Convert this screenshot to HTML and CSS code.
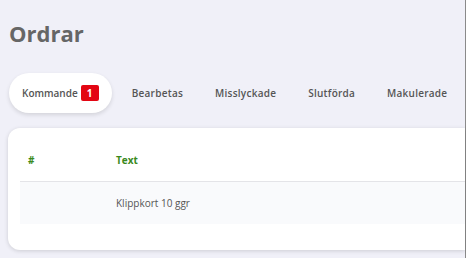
FILE: index.html
```html
<!DOCTYPE html>
<html lang="sv">
<head>
  <meta charset="UTF-8">
  <meta name="viewport" content="width=device-width, initial-scale=1.0">
  <title>Ordrar</title>
  <link rel="stylesheet" href="styles.css">
</head>
<body>
  <div class="page">
    <h1>Ordrar</h1>
    <div class="tabs">
      <div class="tab active">Kommande <span class="badge">1</span></div>
      <div class="tab">Bearbetas</div>
      <div class="tab">Misslyckade</div>
      <div class="tab">Slutförda</div>
      <div class="tab">Makulerade</div>
    </div>
    <div class="card">
      <table>
        <thead>
          <tr><th class="col-id">#</th><th>Text</th></tr>
        </thead>
        <tbody>
          <tr><td class="col-id"></td><td>Klippkort 10 ggr</td></tr>
        </tbody>
      </table>
    </div>
  </div>
</body>
</html>
```

FILE: styles.css
```css
body {
  margin: 0;
  font-family: "Open Sans", sans-serif;
  background-color: #f0f0f8;
  overflow: hidden;
}
.page {
  width: 465px;
  height: 258px;
  border-right: 1px solid #8a8a8a;
}
h1 {
  margin: 0;
  padding: 16px 0 0 9px;
  font-size: 22px;
  font-weight: 700;
  color: #666;
  line-height: 34px;
}
.tabs {
  display: flex;
  align-items: center;
  margin: 23px 0 0 9px;
  height: 40px;
}
.tab {
  font-size: 10px;
  font-weight: 600;
  color: #555;
  margin-right: 32px;
  display: flex;
  align-items: center;
  letter-spacing: 0.25px;
}
.tab.active {
  background: white;
  border-radius: 20px;
  height: 40px;
  padding: 0 13px;
  margin-right: 20px;
  letter-spacing: 0;
  box-shadow: 0 2px 4px rgba(0, 0, 0, 0.12);
}
.badge {
  display: inline-block;
  background: #e30613;
  color: white;
  border-radius: 2px;
  width: 18px;
  height: 16px;
  line-height: 16px;
  text-align: center;
  margin-left: 3px;
  font-size: 10px;
  font-weight: 700;
}
.card {
  background: white;
  margin: 15px 0 0 8px;
  border-radius: 12px 0 0 12px;
  height: 122px;
  padding: 10px 0 0 12px;
  box-sizing: border-box;
  box-shadow: 0 1px 4px rgba(0, 0, 0, 0.15);
}
table {
  width: 100%;
  border-collapse: collapse;
}
th {
  text-align: left;
  font-size: 10px;
  font-weight: 700;
  color: #3a8a1c;
  height: 41px;
  border-bottom: 1px solid #e4e4e8;
}
td {
  font-size: 10px;
  color: #555;
  height: 40px;
  background: #f9fafc;
}
.col-id {
  width: 86px;
  padding-left: 8px;
}
```
